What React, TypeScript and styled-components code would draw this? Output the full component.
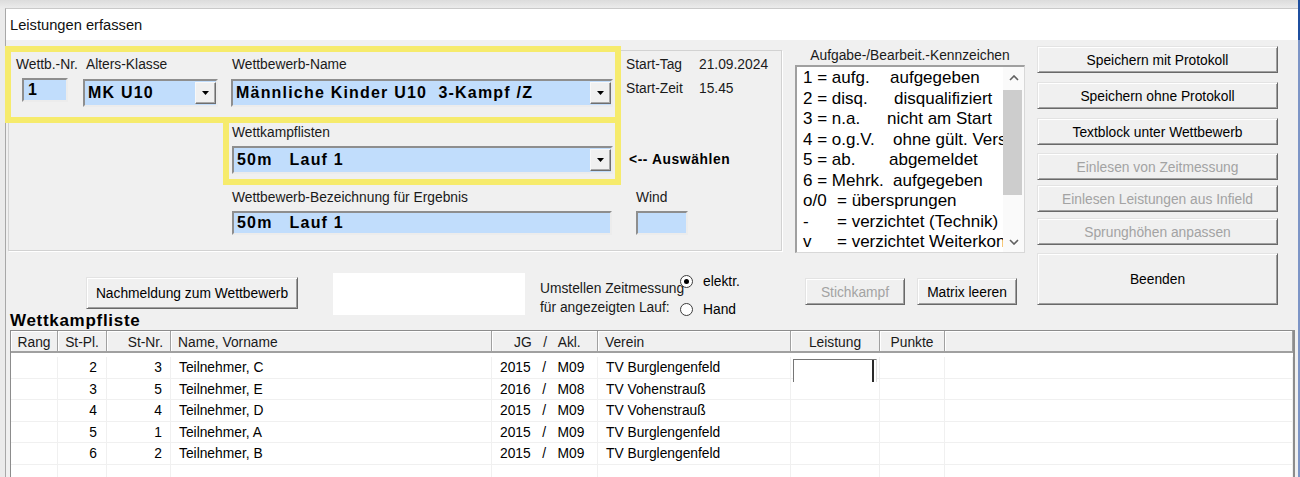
import React from 'react'
import styled, { createGlobalStyle } from 'styled-components'

const GlobalStyle = createGlobalStyle`
  html, body { margin: 0; padding: 0; }
  body {
    font-family: "Liberation Sans", Arial, sans-serif;
    font-size: 13.8px;
    color: #000;
    overflow: hidden;
  }
  * { box-sizing: border-box; }
`

const Screen = styled.div`
  display: flex;
  width: 1300px;
  height: 477px;
  padding: 8px 0 0 5px;
  background:
    linear-gradient(#1f4f9f 0 40px, #7d95c6 40px) right top / 2px 100% no-repeat,
    linear-gradient(#dcdcdc, #ebebeb 8px);
  overflow: hidden;
`

const Window = styled.div`
  width: 1293px;
  display: flex;
  flex-direction: column;
  border-top: 1px solid #c9c9c9;
  border-left: 1px solid #a8a8a8;
  background: #f0f0f0;
`

const TitleBar = styled.div`
  height: 31px;
  padding: 1px 0 0 4px;
  background: #fff;
  font-size: 14.7px;
  line-height: 30px;
  color: #111;
`

const Body = styled.div`
  position: relative;
  flex: 1;
  min-height: 0;
  display: flex;
  flex-direction: column;
  padding-left: 2px;
`

// yellow marker frames drawn over the dialog
const Highlight = styled.div<{ $l: number; $t: number; $w: number; $h: number }>`
  position: absolute;
  left: ${p => p.$l}px;
  top: ${p => p.$t}px;
  width: ${p => p.$w}px;
  height: ${p => p.$h}px;
  border: 6px solid #f6eb6c;
  pointer-events: none;
`

const TopArea = styled.div`
  display: flex;
  align-items: flex-start;
`

const LeftCol = styled.div`
  width: 774px;
  display: flex;
  flex-direction: column;
`

const GroupBox = styled.div`
  margin-top: 10px;
  height: 201px;
  padding: 6px 0 0 7px;
  border: 1px solid #d2d2d2;
  box-shadow: 1px 1px 0 #fff;
`

const FieldRow = styled.div<{ $mt?: number; $ml?: number; $align?: string }>`
  display: flex;
  align-items: ${p => p.$align ?? 'flex-start'};
  margin-top: ${p => p.$mt ?? 0}px;
  margin-left: ${p => p.$ml ?? 0}px;
`

const Field = styled.div<{ $w?: number; $ml?: number }>`
  width: ${p => (p.$w ? `${p.$w}px` : 'auto')};
  margin-left: ${p => p.$ml ?? 0}px;
  flex: none;
`

const Label = styled.div<{ $ml?: number }>`
  margin-left: ${p => p.$ml ?? 0}px;
  line-height: 16px;
  white-space: nowrap;
  color: #1a1a1a;
`

const Box = styled.div<{ $w: number; $h: number; $mt?: number; $ml?: number }>`
  width: ${p => p.$w}px;
  height: ${p => p.$h}px;
  margin-top: ${p => p.$mt ?? 0}px;
  margin-left: ${p => p.$ml ?? 0}px;
  display: flex;
  background: #c1ddfc;
  border: 2px solid;
  border-color: #8e8e8e #ececec #ececec #8e8e8e;
`

const BoxText = styled.span<{ $pad?: number }>`
  flex: 1;
  display: flex;
  align-items: center;
  padding-left: ${p => p.$pad ?? 3}px;
  font-weight: bold;
  font-size: 16px;
  letter-spacing: 1.2px;
  white-space: pre;
  overflow: hidden;
`

const DropButton = styled.span`
  width: 21px;
  margin: 1px 0;
  background: #f0f0f0;
  border: 1px solid;
  border-color: #f8f8f8 #6e6e6e #6e6e6e #f8f8f8;
  box-shadow: inset -1px -1px #a8a8a8;
  display: flex;
  align-items: center;
  justify-content: center;
`

const StartInfo = styled.div`
  margin-left: 13px;
  display: grid;
  grid-template-columns: 73px auto;
  row-gap: 8px;
  line-height: 16px;
  color: #1a1a1a;
`

const Hint = styled.div`
  margin-left: 16px;
  height: 28px;
  line-height: 28px;
  font-weight: bold;
  letter-spacing: 0.6px;
  white-space: nowrap;
`

const BottomRow = styled.div`
  margin-top: 22px;
  height: 42px;
  display: flex;
  align-items: flex-start;
`

const WhiteBox = styled.div`
  width: 192px;
  height: 42px;
  margin-left: 35px;
  background: #fff;
`

const TimeNote = styled.div`
  width: 140px;
  margin: 5.5px 0 0 15px;
  line-height: 19px;
  white-space: nowrap;
  color: #1a1a1a;
`

const RadioGroup = styled.div`
  display: flex;
  flex-direction: column;
`

const RadioItem = styled.div<{ $mt: number }>`
  height: 18px;
  margin-top: ${p => p.$mt}px;
  display: flex;
  align-items: center;
  gap: 10px;
  white-space: nowrap;
`

const RadioDot = styled.span<{ $on?: boolean }>`
  width: 13px;
  height: 13px;
  border-radius: 50%;
  border: 1px solid #3c3c3c;
  background: #fff;
  display: flex;
  align-items: center;
  justify-content: center;
  &::after {
    content: '';
    width: 5px;
    height: 5px;
    border-radius: 50%;
    background: ${p => (p.$on ? '#000' : 'transparent')};
  }
`

const MidCol = styled.div`
  width: 230px;
  margin-left: 13px;
  display: flex;
  flex-direction: column;
`

const ListCaption = styled.div`
  margin-top: 7px;
  line-height: 17px;
  text-align: center;
  white-space: nowrap;
  color: #1a1a1a;
`

const ListBox = styled.div`
  margin-top: 1px;
  height: 188px;
  display: flex;
  background: #fff;
  border-style: solid;
  border-width: 2px 1px 1px 2px;
  border-color: #a0a0a0 #d8d8d8 #d8d8d8 #a0a0a0;
`

const ListItems = styled.div`
  flex: 1;
  min-width: 0;
  overflow: hidden;
  padding: 1px 0 0 6px;
  font-size: 17px;
  line-height: 20.5px;
`

const ListItem = styled.div`
  display: flex;
  white-space: nowrap;
`

const Code = styled.span<{ $w: number }>`
  width: ${p => p.$w}px;
  flex: none;
`

const ScrollBar = styled.div`
  width: 21px;
  flex: none;
  display: flex;
  flex-direction: column;
  background: #fafafa;
`

const ScrollArrow = styled.div`
  height: 21px;
  display: flex;
  align-items: center;
  justify-content: center;
`

const ScrollTrack = styled.div`
  flex: 1;
  padding-top: 2px;
`

const Thumb = styled.div`
  width: 19px;
  height: 105px;
  background: #cdcdcd;
`

const SmallRow = styled.div`
  margin-top: 25px;
  padding-left: 10px;
  display: flex;
  gap: 12px;
`

const RightCol = styled.div`
  width: 241px;
  margin-left: 12px;
  display: flex;
  flex-direction: column;
`

const Btn = styled.button<{ $w?: number; $h?: number; $mt?: number; $ml?: number }>`
  width: ${p => (p.$w ? `${p.$w}px` : '100%')};
  height: ${p => p.$h ?? 27}px;
  margin: ${p => p.$mt ?? 0}px 0 0 ${p => p.$ml ?? 0}px;
  padding: 1px 0 0;
  flex: none;
  font: inherit;
  color: #000;
  white-space: nowrap;
  background: #f0f0f0;
  border: 1px solid;
  border-color: #e3e3e3 #696969 #696969 #e3e3e3;
  box-shadow: inset 1px 1px #fff, inset -1px -1px #a0a0a0;
  &:disabled {
    color: #a3a3a3;
  }
`

const ListTitle = styled.div`
  margin: -2px 0 0 2px;
  height: 15px;
  line-height: 16px;
  font-size: 17px;
  font-weight: bold;
  letter-spacing: 0.7px;
`

const cols = '47px 49px 64px 321px 106px 193px 89px 65px 1fr'

const Grid = styled.div`
  margin: 2px 0 0 2px;
  width: 1285px;
  flex: 1;
  min-height: 0;
  overflow: hidden;
  background: #fff;
  border: 1px solid #8c8c8c;
  border-right: 2px solid #8c8c8c;
  border-bottom: none;
`

const HeadRow = styled.div`
  display: grid;
  grid-template-columns: ${cols};
  height: 22px;
`

const HeadCell = styled.div<{ $align?: string; $pad?: number }>`
  background: #f0f0f0;
  border-right: 1px solid #a0a0a0;
  border-bottom: 2px solid #a0a0a0;
  box-shadow: inset 1px 1px #fff;
  padding: 3px ${p => p.$pad ?? 0}px 0;
  line-height: 17px;
  text-align: ${p => p.$align ?? 'center'};
  white-space: pre;
  color: #1a1a1a;
`

const Rows = styled.div`
  padding-top: 4px;
`

const DataRow = styled.div`
  display: grid;
  grid-template-columns: ${cols};
  height: 21.6px;
  border-bottom: 1px solid #f0f0f0;
`

const Cell = styled.div<{ $align?: string; $pad?: number }>`
  position: relative;
  border-right: 1px solid #f0f0f0;
  padding: 1px ${p => p.$pad ?? 0}px 0;
  line-height: 20px;
  text-align: ${p => p.$align ?? 'left'};
  white-space: pre;
`

const EditBox = styled.div`
  position: absolute;
  left: 2px;
  top: 1.6px;
  width: 84px;
  height: 23px;
  z-index: 1;
  background: #fff;
  border-top: 1px solid #767676;
  border-left: 1px solid #767676;
  border-right: 1px solid #dedede;
  &::after {
    content: '';
    position: absolute;
    right: 2px;
    top: 0;
    width: 2px;
    height: 22px;
    background: #2a2a2a;
  }
`

const Arrow = () => (
  <svg width="8" height="4" viewBox="0 0 8 4">
    <path d="M0 0h7L3.5 4z" fill="#000" />
  </svg>
)

const Chevron = ({ up }: { up?: boolean }) => (
  <svg width="10" height="6" viewBox="0 0 10 6">
    <path d={up ? 'M1 5L5 1l4 4' : 'M1 1l4 4 4-4'} fill="none" stroke="#606060" strokeWidth="1.6" />
  </svg>
)

const codes: [string, string, number][] = [
  ['1 = aufg.', 'aufgegeben', 87],
  ['2 = disq.', 'disqualifiziert', 91],
  ['3 = n.a.', 'nicht am Start', 84],
  ['4 = o.g.V.', 'ohne gült. Versuch', 90],
  ['5 = ab.', 'abgemeldet', 86],
  ['6 = Mehrk.', 'aufgegeben', 90],
  ['o/0', '= übersprungen', 34],
  ['-', '= verzichtet (Technik)', 34],
  ['v', '= verzichtet Weiterkonkurrenz', 34],
]

const actions = [
  { label: 'Speichern mit Protokoll', mt: 6 },
  { label: 'Speichern ohne Protokoll', mt: 9 },
  { label: 'Textblock unter Wettbewerb', mt: 9 },
  { label: 'Einlesen von Zeitmessung', mt: 8, off: true },
  { label: 'Einlesen Leistungen aus Infield', mt: 5, off: true },
  { label: 'Sprunghöhen anpassen', mt: 6, off: true },
  { label: 'Beenden', mt: 8, h: 52 },
]

const starters = [
  { pl: 2, nr: 3, name: 'Teilnehmer, C', jg: 2015, akl: 'M09', verein: 'TV Burglengenfeld' },
  { pl: 3, nr: 5, name: 'Teilnehmer, E', jg: 2016, akl: 'M08', verein: 'TV Vohenstrauß' },
  { pl: 4, nr: 4, name: 'Teilnehmer, D', jg: 2015, akl: 'M09', verein: 'TV Vohenstrauß' },
  { pl: 5, nr: 1, name: 'Teilnehmer, A', jg: 2015, akl: 'M09', verein: 'TV Burglengenfeld' },
  { pl: 6, nr: 2, name: 'Teilnehmer, B', jg: 2015, akl: 'M09', verein: 'TV Burglengenfeld' },
]

export default function App() {
  return (
    <>
      <GlobalStyle />
      <Screen>
        <Window>
          <TitleBar>Leistungen erfassen</TitleBar>
          <Body>
            <TopArea>
              <LeftCol>
                <GroupBox>
                  <FieldRow>
                    <Field $w={67}>
                      <Label>Wettb.-Nr.</Label>
                      <Box $w={46} $h={24} $mt={5} $ml={6}>
                        <BoxText $pad={4}>1</BoxText>
                      </Box>
                    </Field>
                    <Field $w={148}>
                      <Label $ml={3}>Alters-Klasse</Label>
                      <Box $w={135} $h={28} $mt={6}>
                        <BoxText>MK U10</BoxText>
                        <DropButton><Arrow /></DropButton>
                      </Box>
                    </Field>
                    <Field $w={382}>
                      <Label $ml={1}>Wettbewerb-Name</Label>
                      <Box $w={382} $h={28} $mt={6}>
                        <BoxText>Männliche Kinder U10  3-Kampf /Z</BoxText>
                        <DropButton><Arrow /></DropButton>
                      </Box>
                    </Field>
                    <StartInfo>
                      <span>Start-Tag</span>
                      <span>21.09.2024</span>
                      <span>Start-Zeit</span>
                      <span>15.45</span>
                    </StartInfo>
                  </FieldRow>

                  <FieldRow $mt={18} $ml={216} $align="flex-end">
                    <Field>
                      <Label>Wettkampflisten</Label>
                      <Box $w={381} $h={28} $mt={5}>
                        <BoxText>50m   Lauf 1</BoxText>
                        <DropButton><Arrow /></DropButton>
                      </Box>
                    </Field>
                    <Hint>&lt;-- Auswählen</Hint>
                  </FieldRow>

                  <FieldRow $mt={16} $ml={216}>
                    <Field>
                      <Label>Wettbewerb-Bezeichnung für Ergebnis</Label>
                      <Box $w={380} $h={24} $mt={5}>
                        <BoxText>50m   Lauf 1</BoxText>
                      </Box>
                    </Field>
                    <Field $ml={24}>
                      <Label>Wind</Label>
                      <Box $w={52} $h={24} $mt={5} />
                    </Field>
                  </FieldRow>
                </GroupBox>

                <BottomRow>
                  <Btn $w={212} $h={32} $mt={4} $ml={78}>Nachmeldung zum Wettbewerb</Btn>
                  <WhiteBox />
                  <TimeNote>
                    Umstellen Zeitmessung
                    <br />
                    für angezeigten Lauf:
                  </TimeNote>
                  <RadioGroup>
                    <RadioItem $mt={-1}>
                      <RadioDot $on />
                      elektr.
                    </RadioItem>
                    <RadioItem $mt={10}>
                      <RadioDot />
                      Hand
                    </RadioItem>
                  </RadioGroup>
                </BottomRow>
              </LeftCol>

              <MidCol>
                <ListCaption>Aufgabe-/Bearbeit.-Kennzeichen</ListCaption>
                <ListBox>
                  <ListItems>
                    {codes.map(([code, text, x]) => (
                      <ListItem key={code}>
                        <Code $w={x}>{code}</Code>
                        {text}
                      </ListItem>
                    ))}
                  </ListItems>
                  <ScrollBar>
                    <ScrollArrow><Chevron up /></ScrollArrow>
                    <ScrollTrack><Thumb /></ScrollTrack>
                    <ScrollArrow><Chevron /></ScrollArrow>
                  </ScrollBar>
                </ListBox>
                <SmallRow>
                  <Btn $w={100} disabled>Stichkampf</Btn>
                  <Btn $w={100}>Matrix leeren</Btn>
                </SmallRow>
              </MidCol>

              <RightCol>
                {actions.map(a => (
                  <Btn key={a.label} $mt={a.mt} $h={a.h} disabled={a.off}>
                    {a.label}
                  </Btn>
                ))}
              </RightCol>
            </TopArea>

            <ListTitle>Wettkampfliste</ListTitle>
            <Grid>
              <HeadRow>
                <HeadCell>Rang</HeadCell>
                <HeadCell>St-Pl.</HeadCell>
                <HeadCell $align="right" $pad={7}>St-Nr.</HeadCell>
                <HeadCell $align="left" $pad={7}>Name, Vorname</HeadCell>
                <HeadCell $align="left" $pad={22}>JG   /   Akl.</HeadCell>
                <HeadCell $align="left" $pad={7}>Verein</HeadCell>
                <HeadCell>Leistung</HeadCell>
                <HeadCell>Punkte</HeadCell>
                <HeadCell />
              </HeadRow>
              <Rows>
                {starters.map((s, i) => (
                  <DataRow key={s.nr}>
                    <Cell />
                    <Cell $align="right" $pad={9}>{s.pl}</Cell>
                    <Cell $align="right" $pad={8}>{s.nr}</Cell>
                    <Cell $pad={8}>{s.name}</Cell>
                    <Cell $pad={8}>{`${s.jg}   /   ${s.akl}`}</Cell>
                    <Cell $pad={8}>{s.verein}</Cell>
                    <Cell>{i === 0 && <EditBox />}</Cell>
                    <Cell />
                    <Cell />
                  </DataRow>
                ))}
                <DataRow>
                  {Array.from({ length: 9 }, (_, k) => <Cell key={k} />)}
                </DataRow>
              </Rows>
            </Grid>

            <Highlight $l={-1} $t={6} $w={616} $h={77} />
            <Highlight $l={217} $t={77} $w={398} $h={68} />
          </Body>
        </Window>
      </Screen>
    </>
  )
}
